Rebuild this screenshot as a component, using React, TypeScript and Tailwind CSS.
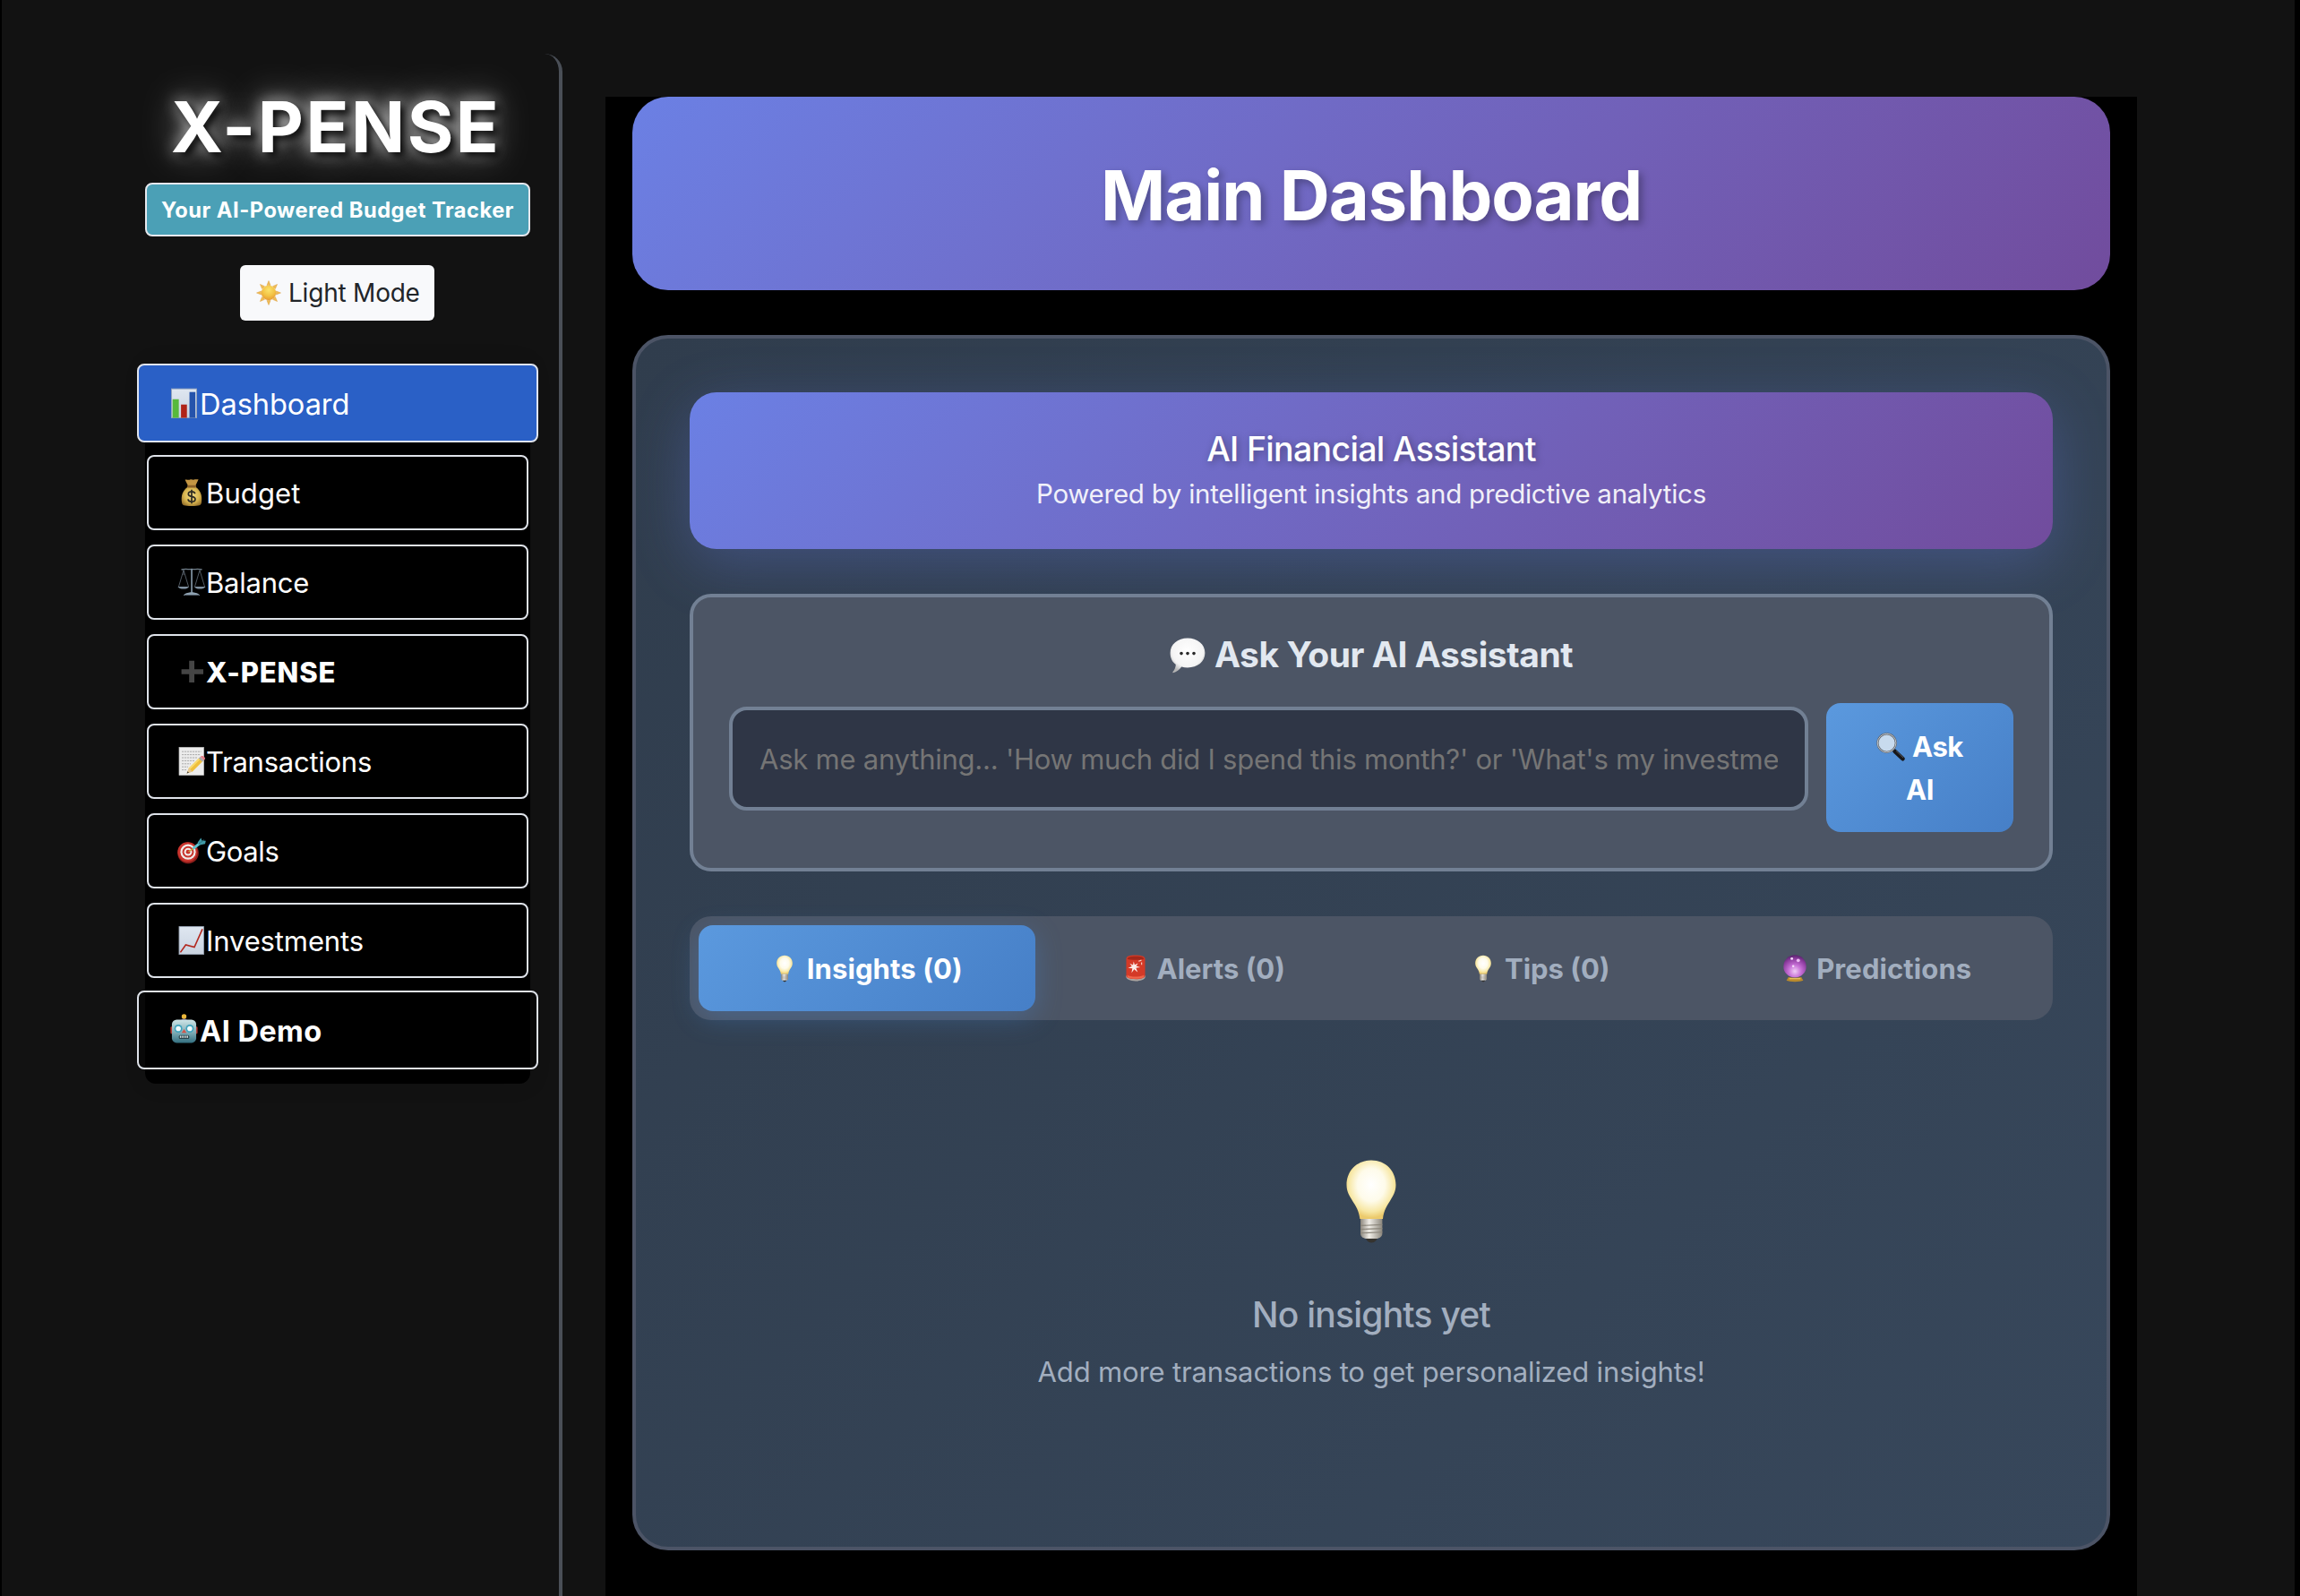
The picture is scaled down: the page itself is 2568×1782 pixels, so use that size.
import React from 'react';

type IconProps = { className?: string };

const Sun = ({ className }: IconProps) => (
  <svg viewBox="0 0 32 32" className={className}>
    <defs>
      <radialGradient id="sunCore" cx="50%" cy="30%" r="75%">
        <stop offset="0" stopColor="#fbe36a" />
        <stop offset="0.55" stopColor="#f3c244" />
        <stop offset="1" stopColor="#e3922f" />
      </radialGradient>
    </defs>
    {[0, 45, 90, 135, 180, 225, 270, 315].map((a) => (
      <path key={a} d="M16 0.6 L18.3 6.4 H13.7 Z" fill="#f0bd55" stroke="#d9962f" strokeWidth="0.5" transform={`rotate(${a} 16 16)`} />
    ))}
    <circle cx="16" cy="16" r="9.4" fill="url(#sunCore)" />
  </svg>
);

const BarChart = ({ className }: IconProps) => (
  <svg viewBox="0 0 32 36" className={className}>
    <defs>
      <linearGradient id="chartPaper" x1="0" y1="0" x2="0" y2="1">
        <stop offset="0" stopColor="#dfe7f1" />
        <stop offset="1" stopColor="#c9d3e0" />
      </linearGradient>
    </defs>
    <rect x="1.2" y="1.2" width="29.6" height="34.2" fill="url(#chartPaper)" stroke="#97a6bd" strokeWidth="1" />
    <rect x="2.4" y="13.5" width="7.4" height="22" fill="#57b93c" />
    <rect x="12.4" y="19.8" width="7" height="15.7" fill="#b02318" />
    <rect x="22.4" y="5" width="7" height="30.5" fill="#2553ab" />
  </svg>
);

const MoneyBag = ({ className }: IconProps) => (
  <svg viewBox="0 0 32 32" className={className}>
    <defs>
      <radialGradient id="bag" cx="50%" cy="45%" r="62%">
        <stop offset="0" stopColor="#f3dc86" />
        <stop offset="0.6" stopColor="#d9b650" />
        <stop offset="1" stopColor="#96712c" />
      </radialGradient>
    </defs>
    <path d="M8.6 1.8 C10.5 1 12.5 2.6 14.2 1.4 C16 0.6 17.5 2.3 19.4 1.3 C21 0.8 22.4 1.6 23.6 1.2 L20.2 8.6 H12 Z" fill="#c39543" />
    <path d="M12 9.6 C5.6 13.5 4 20 5 27 C5.4 30.2 7.6 31 16 31 C24.4 31 26.6 30.2 27 27 C28 20 26.4 13.5 20 9.6 Z" fill="url(#bag)" />
    <rect x="11" y="7.8" width="10.2" height="2.6" rx="1.3" fill="#8b612a" />
    <path d="M19.8 17.2 C19.3 15.4 17.8 14.9 16 14.9 C13.8 14.9 12.3 16 12.3 17.7 C12.3 21.4 20 19.4 20 23.2 C20 25 18.4 26.2 16 26.2 C13.8 26.2 12.2 25.3 11.9 23.4 M16 12.8 V28.2" fill="none" stroke="#2d2a22" strokeWidth="1.7" />
  </svg>
);

const Scales = ({ className }: IconProps) => (
  <svg viewBox="0 0 32 32" className={className}>
    <g fill="none" stroke="#59636d" strokeWidth="0.9">
      <path d="M7 2.6 L1.5 21 M7 2.6 L12.5 21 M7 2.6 V8 M25 2.6 L19.5 21 M25 2.6 L30.5 21" />
    </g>
    <path d="M4.5 2 C10 0.6 13 2.2 16 1.4 C19 2.2 22 0.6 27.5 2" fill="none" stroke="#72808c" strokeWidth="1.3" />
    <rect x="15.2" y="1.2" width="1.7" height="27" fill="#8294a4" />
    <path d="M0.4 21 H13 C12 24.4 2 24.4 0.4 21 Z M19 21 H31.6 C30 24.4 20 24.4 19 21 Z" fill="#7f90a0" />
    <path d="M7 31 C8 28 12 28 14.5 27.2 H17.5 C20 28 24 28 25 31 Z" fill="#8fa2b2" />
    <path d="M8 30.6 H24" stroke="#343b42" strokeWidth="0.8" />
  </svg>
);

const Plus = ({ className }: IconProps) => (
  <svg viewBox="0 0 32 32" className={className}>
    <path d="M13.2 3.8 H19 V13.2 H29 V18.8 H19 V28 H13.2 V18.8 H4.6 V13.2 H13.2 Z" fill="#454545" />
  </svg>
);

const Memo = ({ className }: IconProps) => (
  <svg viewBox="0 0 32 32" className={className}>
    <rect x="2" y="0.4" width="27.6" height="31.2" fill="#ececec" stroke="#bdbdbd" strokeWidth="0.7" />
    <g stroke="#a4a4a4" strokeWidth="0.9" strokeDasharray="2.2 0.8">
      <path d="M5 5.2 H26.5 M5 8.6 H25.8 M5 12 H22 M5 15.4 H19 M5 18.8 H15 M5 22.2 H12 M5 25.6 H10" />
    </g>
    <path d="M10.6 29.6 L13 23.4 L24.6 12 L28.6 15.8 L16.8 27.4 Z" fill="#efbf3c" />
    <path d="M13 23.4 L24.6 12 L26 13.3 L14.4 24.8 Z" fill="#f8dc72" />
    <path d="M10.6 29.6 L13 23.4 L16.8 27.4 Z" fill="#e5c796" />
    <path d="M10.6 29.6 L11.5 27.2 L13 28.7 Z" fill="#3c3c3c" />
    <path d="M23.8 12.8 L25.6 11 L29.6 14.8 L27.8 16.6 Z" fill="#a9a9ad" />
    <path d="M25.6 11 C27 9.4 29 10 30.4 11.4 C31.6 12.8 31 13.8 29.6 14.8 Z" fill="#e3808a" />
  </svg>
);

const Target = ({ className }: IconProps) => (
  <svg viewBox="0 0 32 32" className={className}>
    <circle cx="12" cy="18.4" r="11.8" fill="#8f1f1c" />
    <circle cx="11.4" cy="17.2" r="11" fill="#c9342d" />
    <circle cx="12" cy="17.2" r="8.6" fill="#f1ecea" />
    <circle cx="12" cy="17.2" r="6.4" fill="#c9342d" />
    <circle cx="12" cy="17.2" r="4.4" fill="#f1ecea" />
    <circle cx="12" cy="17.2" r="2.4" fill="#c9342d" />
    <path d="M12.4 17 L18 13.4" stroke="#c7a13b" strokeWidth="1.3" />
    <path d="M16.6 12.6 L24 6.6 L26.4 8.6 L18.4 14.8 Z" fill="#5fc4d0" />
    <path d="M22.6 6.8 L26.4 1.4 L27.4 4.6 L31.8 4.8 L31 8.2 L25.4 9.6 Z" fill="#3f9aa8" />
    <path d="M23.6 8.6 L30 3.6" stroke="#2a6d7a" strokeWidth="0.8" />
  </svg>
);

const TrendUp = ({ className }: IconProps) => (
  <svg viewBox="0 0 32 32" className={className}>
    <rect x="2" y="0.6" width="27.4" height="31" fill="url(#chartPaper)" stroke="#97a3b3" strokeWidth="0.9" />
    <path d="M3.4 29.4 L9.4 21 L19 23.6 L28 3.4" fill="none" stroke="#b2281f" strokeWidth="1.6" />
  </svg>
);

const Robot = ({ className }: IconProps) => (
  <svg viewBox="0 0 32 34" className={className}>
    <defs>
      <linearGradient id="robotHead" x1="0" y1="0" x2="0" y2="1">
        <stop offset="0" stopColor="#cfe6e8" />
        <stop offset="0.55" stopColor="#7fadb6" />
        <stop offset="1" stopColor="#336f80" />
      </linearGradient>
    </defs>
    <path d="M12.6 8 C12.6 4.6 19.4 4.6 19.4 8 Z" fill="#574a86" />
    <circle cx="16" cy="3" r="2.8" fill="#eab63a" />
    <rect x="0.4" y="14.6" width="3" height="8.4" rx="1.4" fill="#b5342c" />
    <rect x="28.6" y="14.6" width="3" height="8.4" rx="1.4" fill="#b5342c" />
    <rect x="2" y="6.6" width="28" height="26.8" rx="5.4" fill="url(#robotHead)" />
    <circle cx="9.4" cy="17" r="4.6" fill="#3fa3bd" />
    <circle cx="22.6" cy="17" r="4.6" fill="#3fa3bd" />
    <circle cx="9.4" cy="17" r="2.9" fill="#f1fbfc" />
    <circle cx="22.6" cy="17" r="2.9" fill="#f1fbfc" />
    <path d="M16 17.4 L18.8 22 H13.2 Z" fill="#d0564b" />
    <rect x="10" y="24.4" width="12" height="4.4" rx="1.6" fill="#28434b" />
    <path d="M11.2 26.4 H21" stroke="#dfe7e8" strokeWidth="2.2" strokeDasharray="1.6 1" />
  </svg>
);

const SpeechBubble = ({ className }: IconProps) => (
  <svg viewBox="0 0 40 40" className={className}>
    <defs>
      <radialGradient id="bubble" cx="50%" cy="38%" r="62%">
        <stop offset="0" stopColor="#ffffff" />
        <stop offset="0.72" stopColor="#f4f4f4" />
        <stop offset="1" stopColor="#b4b4b4" />
      </radialGradient>
    </defs>
    <path d="M20 0.6 C31 0.6 39.4 7.6 39.4 17 C39.4 27 31 33.4 20 33.4 C17.6 33.4 15.4 33.2 13.2 32.6 C11 35.6 7.6 38.6 3.8 39.2 C3.2 39.2 3.2 38.6 3.6 38 C5.6 35.8 6.6 33 6.8 30 C2.8 27.2 0.6 22.6 0.6 17 C0.6 7.6 9 0.6 20 0.6 Z" fill="url(#bubble)" />
    <g fill="#2a2a2a">
      <circle cx="13" cy="17.6" r="1.8" />
      <circle cx="20" cy="17.6" r="1.8" />
      <circle cx="27" cy="17.6" r="1.8" />
    </g>
  </svg>
);

const Magnifier = ({ className }: IconProps) => (
  <svg viewBox="0 0 32 32" className={className}>
    <path d="M17.6 17.8 L21 21" stroke="#8b8b8b" strokeWidth="2.4" />
    <path d="M20.6 20.8 L29.4 29.2" stroke="#17171a" strokeWidth="4.6" strokeLinecap="round" />
    <path d="M22.4 20.8 L29.8 27.8" stroke="#5a5a60" strokeWidth="0.9" strokeLinecap="round" />
    <circle cx="11.6" cy="11.6" r="10.2" fill="#c8dbee" stroke="#5f666e" strokeWidth="2.2" />
    <circle cx="11.6" cy="11.6" r="10.3" fill="none" stroke="#c9ced4" strokeWidth="0.9" />
  </svg>
);

const Bulb = ({ className }: IconProps) => (
  <svg viewBox="0 0 56 93" className={className}>
    <defs>
      <radialGradient id="bulbGlass" cx="50%" cy="42%" r="56%">
        <stop offset="0" stopColor="#ffffff" />
        <stop offset="0.5" stopColor="#fefbea" />
        <stop offset="0.82" stopColor="#f7e7a4" />
        <stop offset="1" stopColor="#ecca6c" />
      </radialGradient>
      <linearGradient id="bulbBase" x1="0" y1="0" x2="1" y2="0">
        <stop offset="0" stopColor="#8c877d" />
        <stop offset="0.4" stopColor="#f1eee8" />
        <stop offset="1" stopColor="#8c877d" />
      </linearGradient>
    </defs>
    <path d="M28 0.5 C44 0.5 55.5 12 55.5 28 C55.5 43 43 48 41 66 H15.4 C13.4 48 0.5 43 0.5 28 C0.5 12 12 0.5 28 0.5 Z" fill="url(#bulbGlass)" />
    <path d="M16 66 H40.4 V82 C40.4 86 37 87.4 34.6 88 H22 C19 87.4 16 86 16 82 Z" fill="url(#bulbBase)" />
    <path d="M16 73.4 L40.4 72.4 M16 77.6 L40.4 76.6 M16 81.8 L40.4 80.8" stroke="#8b867b" strokeWidth="1.1" />
    <path d="M22 88 H34.6 C33.4 91 30.6 92.6 28.2 92.6 C26 92.6 23.4 91 22 88 Z" fill="#35332f" />
  </svg>
);

const Siren = ({ className }: IconProps) => (
  <svg viewBox="0 0 26 32" className={className}>
    <path d="M1.4 25 H24.6 C25.4 29.6 20 31.6 13 31.6 C6 31.6 0.6 29.6 1.4 25 Z" fill="#a9a39f" />
    <path d="M1.6 5 C1.6 1.6 5 0.4 13 0.4 C21 0.4 24.4 1.6 24.4 5 V25 C24.4 28 19 29.2 13 29.2 C7 29.2 1.6 28 1.6 25 Z" fill="#d43a27" />
    <path d="M3 4.8 C3.4 2.4 7 1.6 13 1.6 C19 1.6 22.6 2.4 23 4.8 C20 6.4 6 6.4 3 4.8 Z" fill="#a3281b" />
    <path d="M3 24 C6 27 20 27 23 24 V27 C19 29.2 7 29.2 3 27 Z" fill="#f0654a" />
    <path d="M10.6 8 L11.8 12 L16 10 L13.6 13.4 L18.6 14.8 L13.4 15.8 L15.4 21 L11.2 17.4 L8 21.6 L9 16.4 L3.8 15.8 L8.4 13.8 L5.8 10.2 L9.8 12.2 Z" fill="#fdeee9" />
    <path d="M16.5 7.5 L20 6.4 M20.2 9 V12" stroke="#f9cfc6" strokeWidth="1.2" />
  </svg>
);

const CrystalBall = ({ className }: IconProps) => (
  <svg viewBox="0 0 27 32" className={className}>
    <defs>
      <radialGradient id="crystal" cx="50%" cy="72%" r="70%">
        <stop offset="0" stopColor="#f0cdf6" />
        <stop offset="0.4" stopColor="#c66fd6" />
        <stop offset="0.8" stopColor="#8a3a9c" />
        <stop offset="1" stopColor="#5b2670" />
      </radialGradient>
    </defs>
    <circle cx="13.5" cy="13.8" r="13.2" fill="url(#crystal)" />
    <path d="M6 26.4 Q13.5 28 21 26.4 L23.2 30.4 C20 32.2 7 32.2 3.8 30.4 Z" fill="#b98a2c" />
    <path d="M7 28.2 H20" stroke="#f0cf6e" strokeWidth="1.1" />
    <circle cx="10" cy="5" r="1.5" fill="#f5dcfa" />
    <circle cx="17.4" cy="7" r="2" fill="#eab9f2" />
    <circle cx="11.6" cy="13.6" r="1.3" fill="#f5dcfa" />
  </svg>
);

const navItems = [
  { label: 'Budget', Icon: MoneyBag, text: 'tracking-[0.1px]' },
  { label: 'Balance', Icon: Scales, text: 'tracking-[-0.24px]' },
  { label: 'X-PENSE', Icon: Plus, text: 'font-extrabold tracking-[0.88px]' },
  { label: 'Transactions', Icon: Memo, text: 'tracking-[-0.25px]' },
  { label: 'Goals', Icon: Target, text: 'tracking-[-0.37px]' },
  { label: 'Investments', Icon: TrendUp, text: 'tracking-[-0.12px]' },
];

function Sidebar() {
  return (
    <aside className="ml-32 mt-[60px] flex w-[498px] shrink-0 flex-col items-center rounded-tr-[20px] border-r-4 border-[#4a4f57] pl-8 pr-8">
      <h1 className="mr-1 mt-[41px] h-20 whitespace-nowrap text-[79px] font-bold leading-[80px] tracking-[2.5px] text-white [text-shadow:5px_5px_8px_rgba(0,0,0,0.95),0_0_18px_rgba(255,255,255,0.75),0_0_44px_rgba(255,255,255,0.55)]">
        X-PENSE
      </h1>
      <div className="mt-[23px] flex h-[60px] w-[430px] items-center justify-center whitespace-nowrap rounded-lg border-2 border-[#e6e8ee] bg-[#4ba0b6] pt-px text-[23.7px] font-bold tracking-[0.5px] text-white">
        Your AI-Powered Budget Tracker
      </div>
      <button className="mr-px mt-8 flex h-[62px] w-[217px] items-center rounded-md bg-[#f8f9fb] pl-[18px] text-[28px] tracking-[-0.22px] text-[#212529]">
        <Sun className="mr-2 size-7" />
        Light Mode
      </button>
      <nav className="mt-12 flex h-[804px] w-[430px] flex-col items-center gap-4 rounded-xl bg-black shadow-[0_0_24px_rgba(0,0,0,0.12)]">
        <a className="-mb-[2px] flex h-[88px] w-[448px] shrink-0 items-center rounded-lg border-2 border-[#dfe4ee] bg-[#2a60c6] pl-[35px] text-[32.6px] tracking-[-0.07px] text-white">
          <BarChart className="mr-[2px] h-[34px] w-[31px]" />
          <span className="pt-[2px]">Dashboard</span>
        </a>
        {navItems.map(({ label, Icon, text }) => (
          <a key={label} className="flex h-[84px] w-[426px] shrink-0 items-center rounded-lg border-2 border-[#dfe3ea] bg-black pl-8 text-[31px] text-white">
            <Icon className="size-8" />
            <span className={`pt-[2px] ${text}`}>{label}</span>
          </a>
        ))}
        <a className="-mt-[2px] flex h-[88px] w-[448px] shrink-0 items-center rounded-lg border-2 border-[#dfe3ea] bg-[#00000080] pl-[35px] text-[32.6px] font-bold tracking-[0.4px] text-white">
          <Robot className="-mt-1 mr-[2px] h-[33px] w-[31px]" />
          <span className="pt-[2px]">AI Demo</span>
        </a>
      </nav>
    </aside>
  );
}

function AskPanel() {
  return (
    <section className="mt-[50px] h-[310px] rounded-[24px] border-4 border-[#728094] bg-[#4c5565] px-10 pt-10">
      <h3 className="flex h-12 items-center justify-center gap-[10px] whitespace-nowrap pt-px text-[39px] font-bold tracking-[-0.45px] text-[#e2e8f0]">
        <SpeechBubble className="size-10" />
        Ask Your AI Assistant
      </h3>
      <div className="mt-[30px] flex items-start gap-5">
        <input
          className="mt-1 h-[116px] w-[1205px] rounded-[20px] border-4 border-[#728094] bg-[#2f3646] px-[30px] text-[31px] tracking-[-0.235px] text-white placeholder:text-[#757575]"
          placeholder="Ask me anything... 'How much did I spend this month?' or 'What's my investment balance?'"
        />
        <button className="flex h-36 w-[209px] flex-col items-center justify-center rounded-[16px] bg-linear-135 from-[#5b99de] to-[#467fc7] pt-px text-[31px] font-bold leading-[48px] tracking-[-0.4px] text-white">
          <span className="flex items-center gap-2">
            <Magnifier className="size-8" />
            Ask
          </span>
          <span>AI</span>
        </button>
      </div>
    </section>
  );
}

const tabs = [
  { label: 'Insights (0)', Icon: Bulb, icon: 'ml-[6px] mr-2 h-[31px] w-[18px]', cls: 'bg-linear-135 from-[#5b99de] to-[#467fc7] text-white tracking-[0.1px] shadow-[0_8px_30px_rgba(74,144,226,0.3)]' },
  { label: 'Alerts (0)', Icon: Siren, icon: 'mx-[4px] h-[32px] w-[24px]', cls: 'text-[#a2aebf] tracking-[0px]' },
  { label: 'Tips (0)', Icon: Bulb, icon: 'mx-[7px] h-[31px] w-[18px]', cls: 'text-[#a2aebf] tracking-[0px]' },
  { label: 'Predictions', Icon: CrystalBall, icon: 'ml-1 mr-[3px] h-[32px] w-[26px]', cls: 'text-[#a2aebf] tracking-[0.1px]' },
];

export default function App() {
  return (
    <div className="flex h-[1782px] w-full overflow-hidden border-l-2 border-r-[6px] border-black bg-[#121212] font-['Inter',sans-serif]">
      <Sidebar />
      <main className="ml-12 mt-[108px] w-[1710px] shrink-0 bg-black px-[30px]">
        <header className="flex h-[216px] items-center justify-center rounded-[40px] bg-linear-135 from-[#6b80e4] to-[#714c9d] pt-[4px]">
          <h1 className="whitespace-nowrap text-[77.6px] font-bold tracking-[-1.05px] text-white [text-shadow:4px_4px_8px_rgba(0,0,0,0.3)]">Main Dashboard</h1>
        </header>
        <div className="mt-[50px] h-[1357px] rounded-[40px] border-4 border-[#4c5466] bg-linear-135 from-[#303d4d] to-[#37475b] p-[60px]">
          <section className="flex h-[175px] flex-col items-center rounded-[30px] bg-linear-135 from-[#6b80e4] to-[#714c9d] pt-10 text-white shadow-[0_16px_64px_rgba(102,126,234,0.3)]">
            <h2 className="whitespace-nowrap text-[37.5px] font-medium leading-[48px] tracking-[-0.68px] [text-shadow:2px_2px_8px_rgba(0,0,0,0.35)]">AI Financial Assistant</h2>
            <p className="whitespace-nowrap text-[29.5px] leading-[50px] tracking-[-0.27px] opacity-90">Powered by intelligent insights and predictive analytics</p>
          </section>
          <AskPanel />
          <div className="mt-[50px] grid h-[116px] grid-cols-4 rounded-[24px] bg-[#4c5565] p-[10px]">
            {tabs.map(({ label, Icon, icon, cls }) => (
              <button key={label} className={`flex items-center justify-center rounded-[16px] text-[31px] font-bold ${cls}`}>
                <Icon className={icon} />
                <span className="ml-2 pt-[2px]">{label}</span>
              </button>
            ))}
          </div>
          <div className="flex flex-col items-center pt-[156px] text-[#a2aebf]">
            <Bulb className="h-[93px] w-14" />
            <p className="mt-[50px] whitespace-nowrap text-[39px] font-medium leading-[60px] tracking-[-0.76px]">No insights yet</p>
            <p className="mt-[10px] whitespace-nowrap text-[31px] leading-[48px] tracking-[-0.15px]">Add more transactions to get personalized insights!</p>
          </div>
        </div>
      </main>
    </div>
  );
}
